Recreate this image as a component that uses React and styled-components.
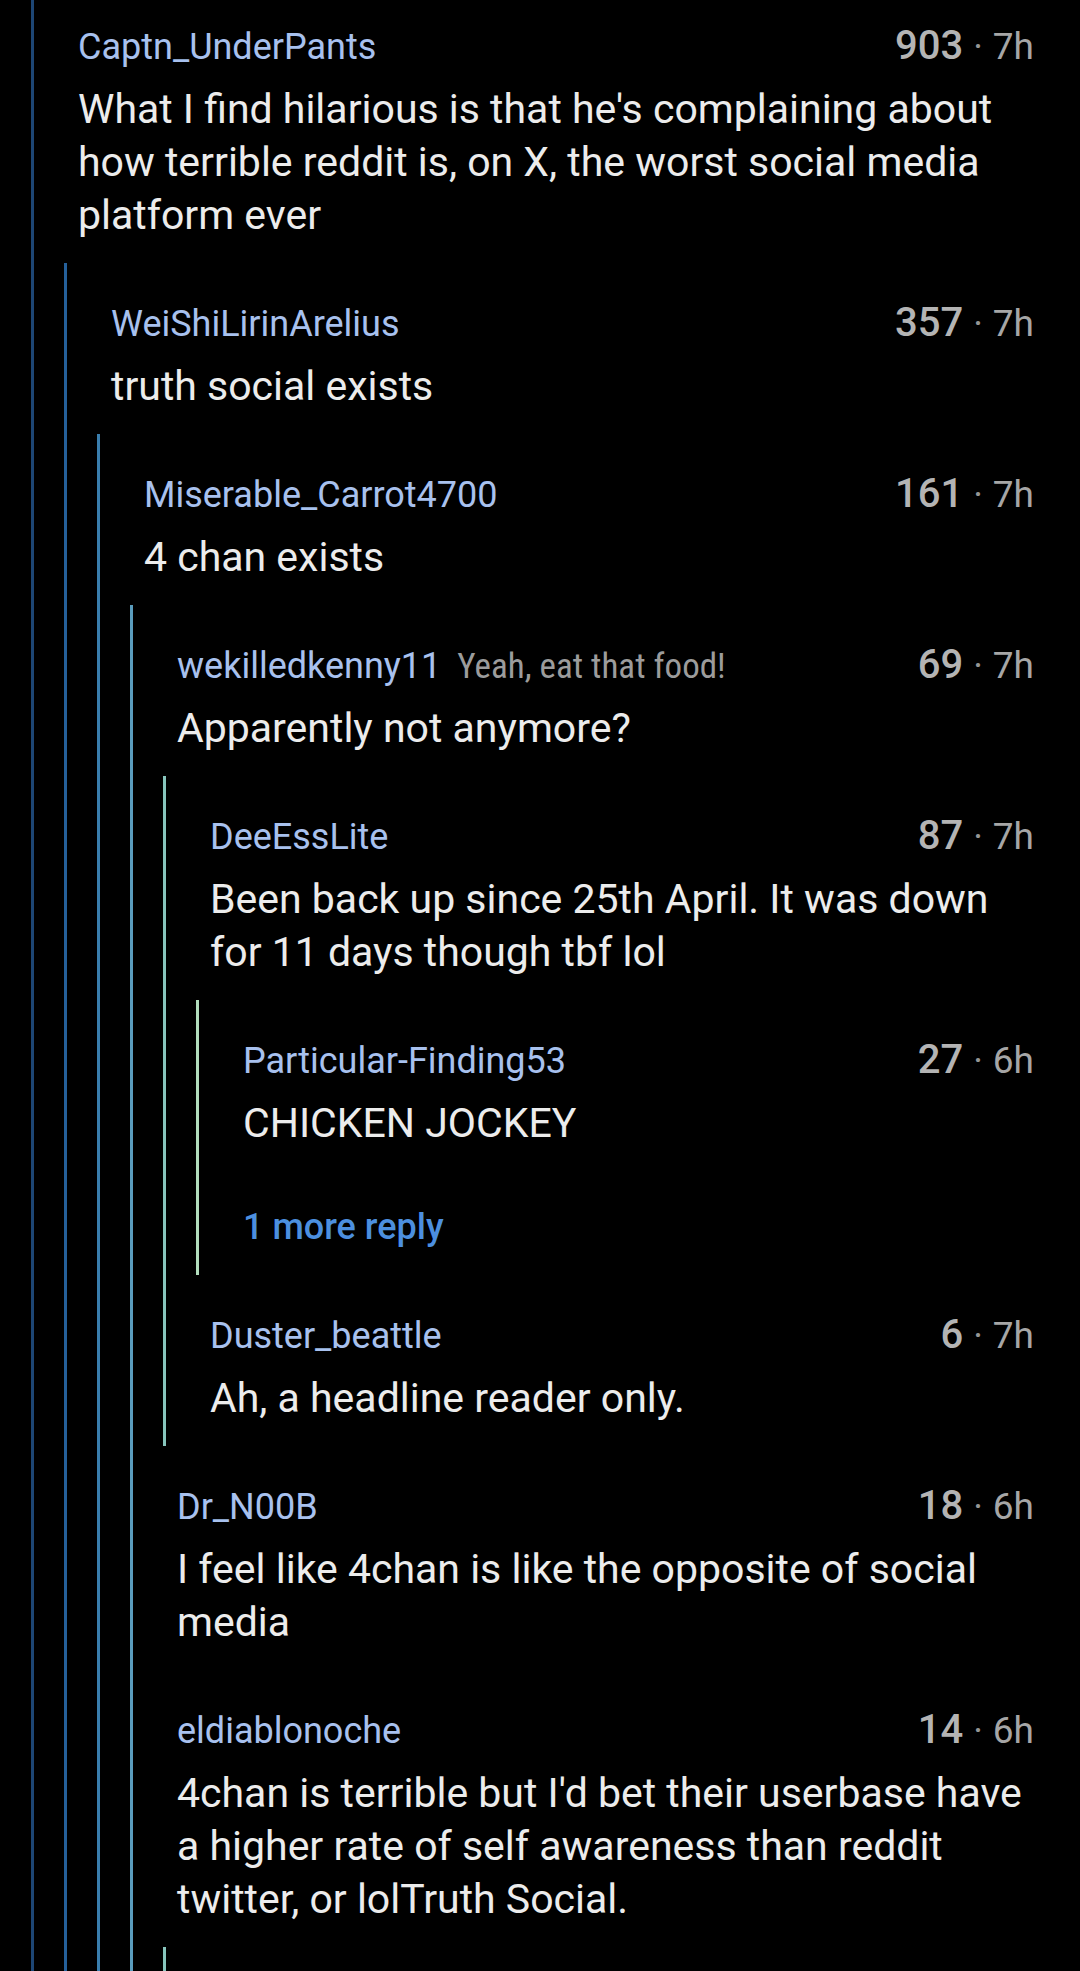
import React from "react";
import styled, { createGlobalStyle } from "styled-components";

const lineColors = ["#1d4675", "#25609a", "#3a7eae", "#5a9cbd", "#87c5bc", "#b2ddbd"];

const thread = {
    author: "Captn_UnderPants",
    score: 903,
    age: "7h",
    body: "What I find hilarious is that he's complaining about how terrible reddit is, on X, the worst social media platform ever",
    replies: [
        {
            author: "WeiShiLirinArelius",
            score: 357,
            age: "7h",
            body: "truth social exists",
            replies: [
                {
                    author: "Miserable_Carrot4700",
                    score: 161,
                    age: "7h",
                    body: "4 chan exists",
                    replies: [
                        {
                            author: "wekilledkenny11",
                            flair: "Yeah, eat that food!",
                            score: 69,
                            age: "7h",
                            body: "Apparently not anymore?",
                            replies: [
                                {
                                    author: "DeeEssLite",
                                    score: 87,
                                    age: "7h",
                                    body: "Been back up since 25th April. It was down for 11 days though tbf lol",
                                    more: 1,
                                    replies: [
                                        {
                                            author: "Particular-Finding53",
                                            score: 27,
                                            age: "6h",
                                            body: "CHICKEN JOCKEY",
                                        },
                                    ],
                                },
                                {
                                    author: "Duster_beattle",
                                    score: 6,
                                    age: "7h",
                                    body: "Ah, a headline reader only.",
                                },
                            ],
                        },
                        {
                            author: "Dr_N00B",
                            score: 18,
                            age: "6h",
                            body: "I feel like 4chan is like the opposite of social media",
                        },
                        {
                            author: "eldiablonoche",
                            score: 14,
                            age: "6h",
                            body: "4chan is terrible but I'd bet their userbase have a higher rate of self awareness than reddit twitter, or lolTruth Social.",
                            continued: true,
                        },
                    ],
                },
            ],
        },
    ],
};

function Comment({ node, depth })
{
    const hasReplies = node.replies || node.continued;
    return (
        <>
            <CommentLayout>
                <Header>
                    <Who>
                        <Author>{node.author}</Author>
                        {node.flair && <Flair>{node.flair}</Flair>}
                    </Who>
                    <Meta>
                        <Score>{node.score}</Score>
                        <Dot>·</Dot>
                        <Age>{node.age}</Age>
                    </Meta>
                </Header>
                <Body>{node.body}</Body>
            </CommentLayout>
            {hasReplies && (
                <Replies $depth={depth + 1}>
                    {(node.replies || []).map((reply) => <Comment key={reply.author} node={reply} depth={depth + 1}/>)}
                    {node.more && <MoreReplies>{node.more} more reply</MoreReplies>}
                    {node.continued && <Continued/>}
                </Replies>
            )}
        </>
    );
}

function App()
{
    return (
        <Page>
            <GlobalStyle/>
            <Feed>
                <Replies $depth={0}>
                    <Comment node={thread} depth={0}/>
                </Replies>
            </Feed>
        </Page>
    );
}

export default App;

const GlobalStyle = createGlobalStyle`
    html, body {
        margin: 0;
        background: #000;
    }
    body {
        font-family: Roboto, "Noto Sans", "Liberation Sans", sans-serif;
    }
`
const Page = styled.div`
    height: 1971px;
    overflow: hidden;
    box-sizing: border-box;
    padding-left: 31px;
    background: #000;
`
const Feed = styled.div`
    margin-top: -14px;
`
const Replies = styled.div`
    display: flex;
    flex-flow: column nowrap;
    margin-left: ${(p) => (p.$depth === 0 ? "0" : "30px")};
    border-left: 3px solid ${(p) => lineColors[p.$depth % lineColors.length]};
`
const CommentLayout = styled.div`
    display: flex;
    flex-flow: column nowrap;
    padding: 36px 46px 21px 44px;
`
const Header = styled.div`
    display: flex;
    flex-flow: row nowrap;
    justify-content: space-between;
    align-items: baseline;
    height: 48px;
    line-height: 48px;
    white-space: nowrap;
`
const Who = styled.div`
    display: flex;
    align-items: baseline;
    gap: 16px;
`
const Author = styled.span`
    color: #a8c1ee;
    font-size: 36px;
`
const Flair = styled.span`
    color: #9c9c9c;
    font-family: "Roboto Condensed", Roboto, sans-serif;
    font-stretch: 87.5%;
    font-size: 35px;
`
const Meta = styled.div`
    display: flex;
    align-items: baseline;
`
const Score = styled.span`
    color: #b4b4b4;
    font-size: 40px;
    font-weight: 500;
`
const Dot = styled.span`
    color: #959595;
    font-size: 37px;
    margin: 0 10px;
`
const Age = styled.span`
    color: #a6a6a6;
    font-size: 37px;
`
const Body = styled.p`
    margin: 13px 0 0;
    color: #ececec;
    font-size: 41px;
    line-height: 53px;
`
const MoreReplies = styled.span`
    padding: 32px 0 24px 44px;
    color: #4c8fdf;
    font-size: 36px;
    font-weight: 500;
    line-height: 48px;
`
const Continued = styled.div`
    height: 80px;
`
